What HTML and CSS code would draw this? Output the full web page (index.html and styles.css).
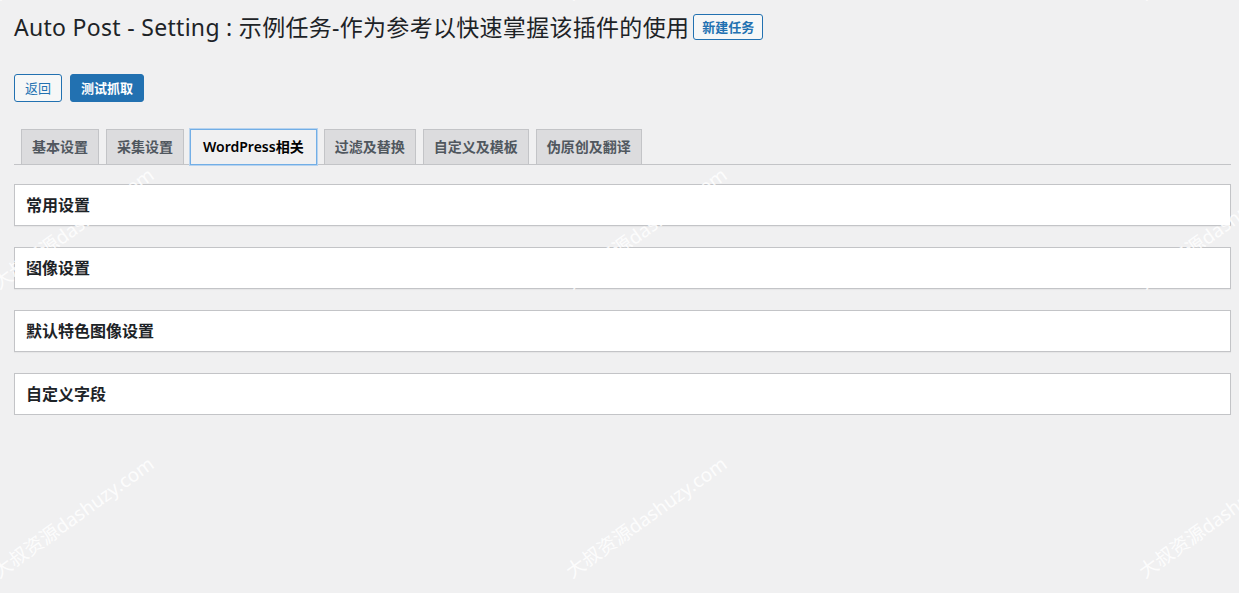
FILE: index.html
```html
<!DOCTYPE html>
<html lang="zh-CN">
<head>
    <meta charset="UTF-8">
    <meta name="viewport" content="width=device-width, initial-scale=1.0">
    <title>Auto Post - Setting</title>
    <link rel="stylesheet" href="styles.css">
</head>
<body>
    <div class="wrap">
        <div class="title-row">
            <h1>Auto Post - Setting : 示例任务-作为参考以快速掌握该插件的使用</h1>
            <a class="page-title-action" href="#">新建任务</a>
        </div>

        <div class="actions">
            <button class="button">返回</button>
            <button class="button button-primary">测试抓取</button>
        </div>

        <div class="nav-tab-wrapper">
            <a class="nav-tab" href="#">基本设置</a>
            <a class="nav-tab" href="#">采集设置</a>
            <a class="nav-tab nav-tab-active" href="#">WordPress相关</a>
            <a class="nav-tab" href="#">过滤及替换</a>
            <a class="nav-tab" href="#">自定义及模板</a>
            <a class="nav-tab" href="#">伪原创及翻译</a>
        </div>

        <div class="postbox"><h2>常用设置</h2></div>
        <div class="postbox"><h2>图像设置</h2></div>
        <div class="postbox"><h2>默认特色图像设置</h2></div>
        <div class="postbox"><h2>自定义字段</h2></div>
    </div>

    <div class="watermarks" id="watermarks"></div>

    <script>
        // Repeat the site watermark over the page
        const layer = document.getElementById('watermarks');
        for (let row = 0; row < 3; row++) {
            for (let col = 0; col < 3; col++) {
                const mark = document.createElement('span');
                mark.className = 'wm';
                mark.textContent = '大叔资源dashuzy.com';
                mark.style.left = (2 + col * 573) + 'px';
                mark.style.top = (583 - row * 289 - 24) + 'px';
                layer.appendChild(mark);
            }
        }
    </script>
</body>
</html>
```

FILE: styles.css
```css
body {
    margin: 0;
    padding: 0;
    background-color: #f0f0f1;
    color: #1d2327;
    font-family: "Noto Sans", "Noto Sans CJK SC", sans-serif;
    font-size: 13px;
}
.wrap {
    padding: 12px 8px 0 14px;
}
.title-row {
    display: flex;
    align-items: center;
    gap: 4px;
}
.title-row h1 {
    margin: 0;
    font-size: 23px;
    font-weight: 400;
    line-height: 30px;
    letter-spacing: 0.3px;
    color: #1d2327;
}
.page-title-action {
    display: inline-block;
    border: 1px solid #2271b1;
    border-radius: 3px;
    background: #f6f7f7;
    color: #2271b1;
    font-size: 13px;
    font-weight: 600;
    line-height: 24px;
    padding: 0 8px;
    text-decoration: none;
}
.actions {
    display: flex;
    gap: 8px;
    margin-top: 32px;
}
.button {
    font-family: inherit;
    font-size: 13px;
    line-height: 26px;
    padding: 0 10px;
    border: 1px solid #2271b1;
    border-radius: 3px;
    background: #f6f7f7;
    color: #2271b1;
    cursor: pointer;
}
.button-primary {
    background: #2271b1;
    color: #fff;
    font-weight: 600;
}
.nav-tab-wrapper {
    display: flex;
    margin-top: 27px;
    border-bottom: 1px solid #c3c4c7;
}
.nav-tab {
    margin-left: 7px;
    margin-bottom: -1px;
    padding: 0 10px;
    border: 1px solid #c3c4c7;
    background: #dcdcde;
    color: #50575e;
    font-size: 14px;
    font-weight: 600;
    line-height: 34px;
    text-decoration: none;
}
.nav-tab-active {
    margin-left: 6px;
    padding: 0 12px;
    background: #f0f0f1;
    color: #000;
    border-color: #72aee6;
    box-shadow: 0 0 0 1px #b7d3ef;
}
.postbox {
    margin-top: 19px;
    background: #fff;
    border: 1px solid #c3c4c7;
    box-shadow: 0 1px 1px rgba(0, 0, 0, 0.04);
}
.postbox + .postbox {
    margin-top: 21px;
}
.postbox h2 {
    margin: 0;
    padding: 0 11px;
    font-size: 16px;
    font-weight: 700;
    line-height: 40px;
    color: #1d2327;
}
.watermarks {
    position: absolute;
    top: 0;
    left: 0;
    width: 1239px;
    height: 593px;
    overflow: hidden;
    pointer-events: none;
}
.wm {
    position: absolute;
    font-family: "Noto Sans", "Noto Sans CJK SC", sans-serif;
    font-size: 19px;
    line-height: 24px;
    white-space: nowrap;
    color: rgba(255, 255, 255, 0.85);
    transform: rotate(-35.6deg);
    transform-origin: 0 100%;
}
```
